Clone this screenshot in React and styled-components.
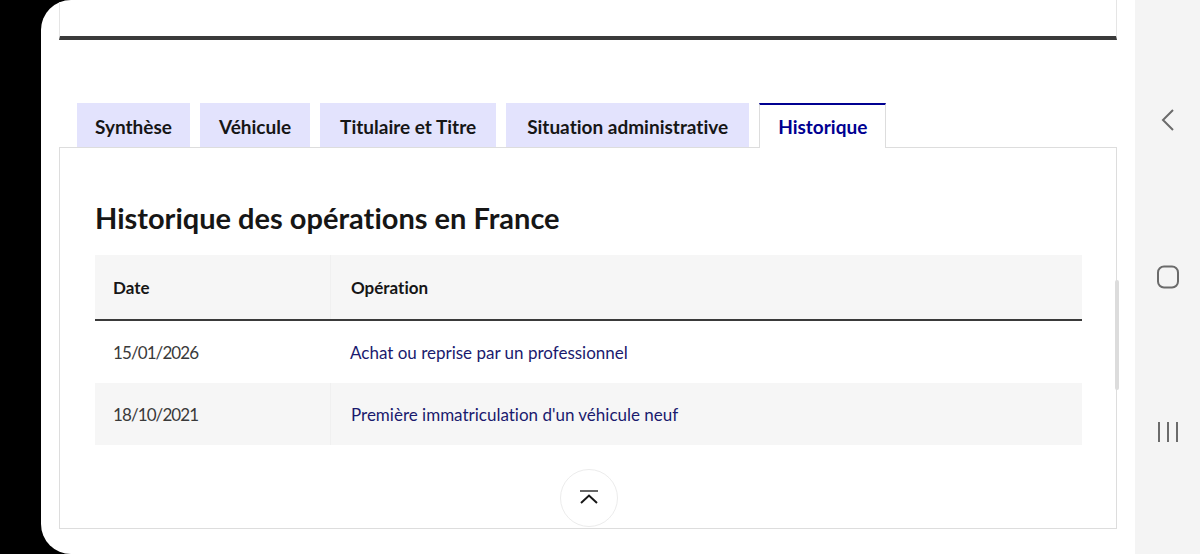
import React from "react";
import styled, { createGlobalStyle } from "styled-components";

const Global = createGlobalStyle`
  html, body { margin: 0; padding: 0; background: #000; overflow: hidden; }
  body {
    font-family: "Lato", "Noto Sans", sans-serif;
    color: #161616;
    font-variant-ligatures: none;
    font-feature-settings: "liga" 0;
  }
  * { box-sizing: border-box; }
`;

const Device = styled.div`
  display: flex;
  width: 1200px;
  height: 554px;
  padding-left: 41px;
  background: #000;
`;

const Screen = styled.div`
  flex: 1;
  display: flex;
  background: #fff;
  border-radius: 30px 0 0 30px;
  overflow: hidden;
`;

const Content = styled.div`
  position: relative;
  flex: 1;
  display: flex;
  flex-direction: column;
  padding: 0 18px;
`;

const TopBlock = styled.div`
  height: 40px;
  border-left: 1px solid #e5e5e5;
  border-right: 1px solid #e5e5e5;
  border-bottom: 4px solid #3a3a3a;
`;

const Tabs = styled.div`
  display: flex;
  gap: 10px;
  margin-top: 63px;
  padding-left: 18px;
  position: relative;
  z-index: 1;
`;

const Tab = styled.div`
  display: flex;
  align-items: center;
  padding: 0 ${p => p.$pad || 18}px;
  font-size: 19px;
  font-weight: 700;
  background: ${p => (p.$active ? "#fff" : "#e3e3fd")};
  color: ${p => (p.$active ? "#000091" : "#161616")};
  border-top: 2px solid ${p => (p.$active ? "#000091" : "transparent")};
  border-left: 1px solid ${p => (p.$active ? "#dddddd" : "transparent")};
  border-right: 1px solid ${p => (p.$active ? "#dddddd" : "transparent")};
  margin-bottom: ${p => (p.$active ? "-1px" : "0")};
  height: ${p => (p.$active ? "45px" : "44px")};
`;

const Panel = styled.div`
  height: 382px;
  border: 1px solid #dddddd;
  padding: 52px 34px 0 35px;
  display: flex;
  flex-direction: column;
`;

const Title = styled.h2`
  margin: 0 0 19px;
  font-size: 29px;
  line-height: 36px;
  font-weight: 700;
  color: #161616;
`;

const Table = styled.div`
  display: flex;
  flex-direction: column;
`;

const Row = styled.div`
  display: grid;
  grid-template-columns: 235px 1fr;
  height: ${p => (p.$head ? "66px" : "62px")};
  background: ${p => (p.$shade ? "#f6f6f6" : "#fff")};
  border-bottom: ${p => (p.$head ? "2px solid #3a3a3a" : "none")};
`;

const Cell = styled.div`
  display: flex;
  align-items: center;
  padding-left: ${p => (p.$second ? "20px" : "18px")};
  font-size: 17px;
  font-weight: ${p => (p.$head ? 700 : 400)};
  letter-spacing: ${p => (p.$num ? "-0.9px" : "0")};
  color: ${p => (p.$link ? "#1a1a6e" : p.$head ? "#161616" : "#3a3a3a")};
  border-left: ${p => (p.$second && p.$shaded ? "1px solid #f0f0f0" : "none")};
`;

const ButtonWrap = styled.div`
  display: flex;
  justify-content: center;
  margin-top: 24px;
`;

const TopButton = styled.div`
  width: 58px;
  height: 58px;
  border-radius: 50%;
  border: 1px solid #ececec;
  display: flex;
  align-items: center;
  justify-content: center;
  background: #fff;
`;

const Scrollbar = styled.div`
  position: absolute;
  right: 16px;
  top: 280px;
  width: 4px;
  height: 110px;
  border-radius: 2px;
  background: #dcdcdc;
`;

const NavBar = styled.div`
  width: 65px;
  background: #f4f4f4;
  display: flex;
  flex-direction: column;
  align-items: center;
  justify-content: space-between;
  padding: 108px 0 111px;
`;

const rows = [
  ["15/01/2026", "Achat ou reprise par un professionnel"],
  ["18/10/2021", "Première immatriculation d'un véhicule neuf"],
];

export default function App() {
  return (
    <>
      <Global />
      <Device>
        <Screen>
          <Content>
            <TopBlock />
            <Tabs>
              <Tab $pad={17}>Synthèse</Tab>
              <Tab $pad={18}>Véhicule</Tab>
              <Tab $pad={19}>Titulaire et Titre</Tab>
              <Tab $pad={20}>Situation administrative</Tab>
              <Tab $active $pad={18}>Historique</Tab>
            </Tabs>
            <Panel>
              <Title>Historique des opérations en France</Title>
              <Table>
                <Row $head $shade>
                  <Cell $head>Date</Cell>
                  <Cell $head $second $shaded>Opération</Cell>
                </Row>
                {rows.map(([d, o], i) => (
                  <Row key={d} $shade={i % 2 === 1}>
                    <Cell $num>{d}</Cell>
                    <Cell $second $link $shaded={i % 2 === 1}>{o}</Cell>
                  </Row>
                ))}
              </Table>
              <ButtonWrap>
                <TopButton>
                  <svg width="22" height="18" viewBox="0 0 22 18">
                    <line x1="2" y1="2" x2="20" y2="2" stroke="#666" strokeWidth="2" />
                    <polyline points="3,14 11,6.5 19,14" fill="none" stroke="#161616" strokeWidth="2" />
                  </svg>
                </TopButton>
              </ButtonWrap>
            </Panel>
            <Scrollbar />
          </Content>
          <NavBar>
            <svg width="16" height="24" viewBox="0 0 16 24">
              <polyline points="13,2 3,12 13,22" fill="none" stroke="#6b6b6b" strokeWidth="2" />
            </svg>
            <svg width="22" height="24" viewBox="0 0 22 24">
              <rect x="1" y="1.5" width="20" height="21" rx="6" fill="none" stroke="#6b6b6b" strokeWidth="2" />
            </svg>
            <svg width="22" height="22" viewBox="0 0 22 22">
              <line x1="2" y1="1" x2="2" y2="21" stroke="#6b6b6b" strokeWidth="2" />
              <line x1="11" y1="1" x2="11" y2="21" stroke="#6b6b6b" strokeWidth="2" />
              <line x1="20" y1="1" x2="20" y2="21" stroke="#6b6b6b" strokeWidth="2" />
            </svg>
          </NavBar>
        </Screen>
      </Device>
    </>
  );
}
